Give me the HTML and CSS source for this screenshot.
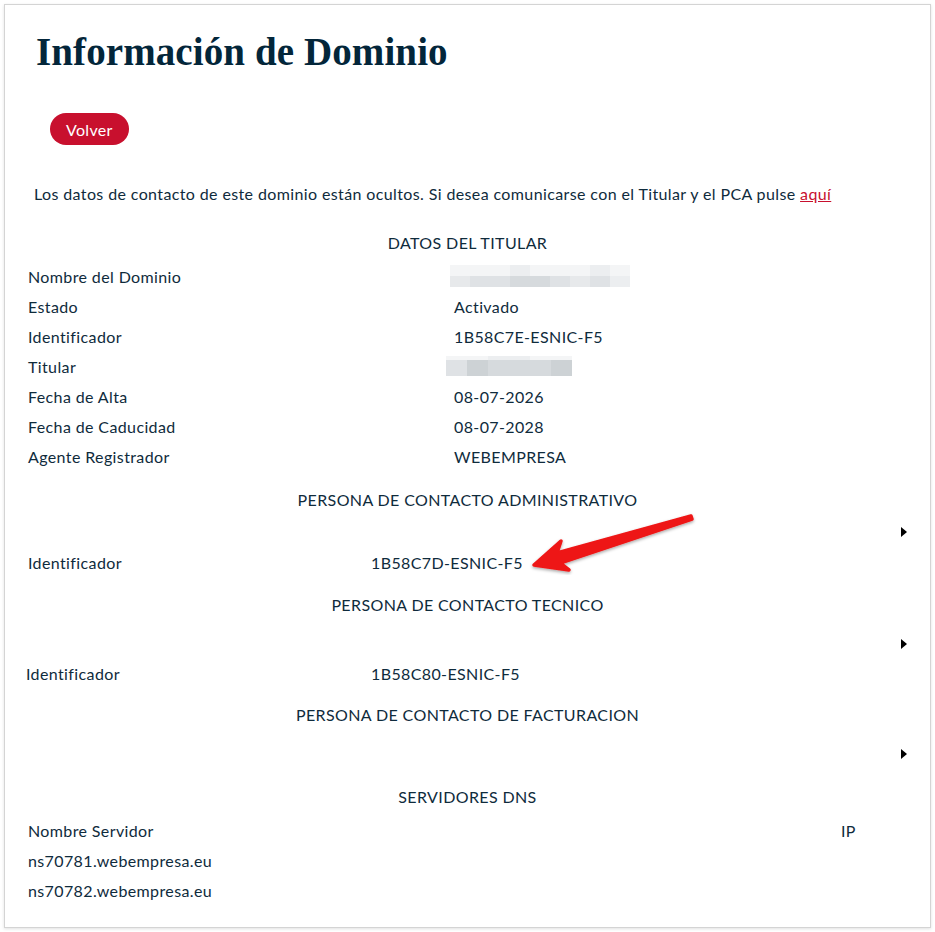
FILE: index.html
```html
<!DOCTYPE html>
<html>
<head>
    <title>Información de Dominio</title>
    <link rel="stylesheet" href="styles.css">
</head>
<body>
    <div class="card">
        <h1 class="title">Información de Dominio</h1>

        <button class="btn-back" type="button">Volver</button>

        <p class="notice">Los datos de contacto de este dominio están ocultos. Si desea comunicarse con el Titular y el PCA pulse <a href="#">aquí</a></p>

        <div class="section-title">DATOS DEL TITULAR</div>
        <div class="data-row">
            <span>Nombre del Dominio</span>
            <span class="masked masked-domain">
                <i class="m1"></i><i class="m1"></i><i class="m1"></i><i class="m2"></i><i class="m1"></i><i class="m1"></i><i class="m1"></i><i class="m2"></i><i class="m1"></i>
                <i class="m3"></i><i class="m4"></i><i class="m4"></i><i class="m5"></i><i class="m5"></i><i class="m4"></i><i class="m3"></i><i class="m4"></i><i class="m2"></i>
            </span>
        </div>
        <div class="data-row"><span>Estado</span><span>Activado</span></div>
        <div class="data-row"><span>Identificador</span><span>1B58C7E-ESNIC-F5</span></div>
        <div class="data-row">
            <span>Titular</span>
            <span class="masked masked-holder">
                <i class="m1"></i><i class="m1"></i><i class="m2"></i><i class="m2"></i><i class="m1"></i><i class="m1"></i><i class="m0"></i>
                <i class="m4"></i><i class="m6"></i><i class="m5"></i><i class="m5"></i><i class="m5"></i><i class="m6"></i><i class="m0"></i>
            </span>
        </div>
        <div class="data-row"><span>Fecha de Alta</span><span>08-07-2026</span></div>
        <div class="data-row"><span>Fecha de Caducidad</span><span>08-07-2028</span></div>
        <div class="data-row"><span>Agente Registrador</span><span>WEBEMPRESA</span></div>

        <div class="section-title section-admin">PERSONA DE CONTACTO ADMINISTRATIVO</div>
        <div class="toggle toggle-short"><span class="caret"></span></div>
        <div class="contact-row"><span>Identificador</span><span>1B58C7D-ESNIC-F5</span></div>

        <div class="section-title section-tech">PERSONA DE CONTACTO TECNICO</div>
        <div class="toggle"><span class="caret"></span></div>
        <div class="contact-row contact-tech"><span>Identificador</span><span>1B58C80-ESNIC-F5</span></div>

        <div class="section-title section-billing">PERSONA DE CONTACTO DE FACTURACION</div>
        <div class="toggle"><span class="caret"></span></div>

        <div class="section-title section-dns">SERVIDORES DNS</div>
        <div class="dns-row dns-head"><span>Nombre Servidor</span><span>IP</span></div>
        <div class="dns-row"><span>ns70781.webempresa.eu</span><span></span></div>
        <div class="dns-row"><span>ns70782.webempresa.eu</span><span></span></div>

        <!-- nota: flecha roja sobre el identificador administrativo -->
        <svg class="pointer" width="180" height="70" viewBox="520 505 180 70">
            <defs>
                <filter id="shadow" x="-20%" y="-40%" width="140%" height="180%">
                    <feDropShadow dx="0" dy="1.5" stdDeviation="1.5" flood-color="#000" flood-opacity="0.35"/>
                </filter>
            </defs>
            <polygon points="534,565 561,541 557,553 691,516 692,519 560,563 569,570" fill="#ee1414" stroke="#ee1414" stroke-width="3.5" stroke-linejoin="round" filter="url(#shadow)"/>
        </svg>
    </div>
</body>
</html>
```

FILE: styles.css
```css
body {
    margin: 0;
    padding: 4px;
    background: #fff;
    font-family: Lato, "Open Sans", sans-serif;
    font-size: 16px;
    letter-spacing: 0.38px;
    color: #0f2b3c;
}
.card {
    position: relative;
    background: #fff;
    border: 1px solid #d4d4d4;
    box-shadow: 0 1px 3px rgba(0,0,0,0.12);
    padding: 23px 23px 21px;
    min-height: 878px;
}
.title {
    margin: 0 0 0 8px;
    font-family: "Liberation Serif", serif;
    font-weight: bold;
    font-size: 39px;
    line-height: 47px;
    letter-spacing: 0.1px;
    color: #03263a;
}
.btn-back {
    display: block;
    margin: 38px 0 0 22px;
    height: 32px;
    padding: 0 16px;
    border: none;
    border-radius: 16px;
    background: #c8102e;
    color: #fff;
    font-family: inherit;
    font-size: 16px;
    letter-spacing: 0.3px;
    cursor: pointer;
}
.notice {
    margin: 34px 0 0 6px;
    line-height: 30px;
}
.notice a {
    color: #c8102e;
}
.section-title {
    margin-top: 18px;
    height: 30px;
    line-height: 32px;
    text-align: center;
}
.section-admin { margin-top: 13px; }
.section-tech { margin-top: 14px; }
.section-billing { margin-top: 13px; }
.section-dns { margin-top: 11px; }
.data-row {
    display: grid;
    grid-template-columns: 426px 1fr;
    align-items: center;
    height: 30px;
}
.section-title + .data-row {
    margin-top: 4px;
}
.masked {
    display: grid;
    grid-auto-rows: 11px;
}
.masked i {
    display: block;
}
.masked-domain {
    margin-left: -4px;
    width: 180px;
    grid-template-columns: repeat(9, 20px);
}
.masked-holder {
    margin-left: -8px;
    width: 136px;
    grid-template-columns: repeat(6, 21px) 10px;
    grid-template-rows: 4px 16px;
}
.m0 { background: #fff; }
.m1 { background: #f4f5f6; }
.m2 { background: #eceef0; }
.m3 { background: #e7e9eb; }
.m4 { background: #dfe2e5; }
.m5 { background: #d6dadd; }
.m6 { background: #cdd2d5; }
.toggle {
    height: 41px;
    box-sizing: border-box;
    padding-top: 20px;
    display: flex;
    justify-content: flex-end;
}
.toggle-short {
    height: 35px;
    padding-top: 13px;
}
.caret {
    width: 0;
    height: 0;
    border-left: 6px solid #000;
    border-top: 5px solid transparent;
    border-bottom: 5px solid transparent;
}
.contact-row {
    display: grid;
    grid-template-columns: 343px 1fr;
    align-items: center;
    height: 26px;
}
.contact-tech span:first-child {
    margin-left: -2px;
}
.dns-row {
    display: grid;
    grid-template-columns: 813px 1fr;
    align-items: center;
    height: 30px;
}
.dns-head {
    margin-top: 4px;
}
.pointer {
    position: absolute;
    left: 515px;
    top: 500px;
}
```
